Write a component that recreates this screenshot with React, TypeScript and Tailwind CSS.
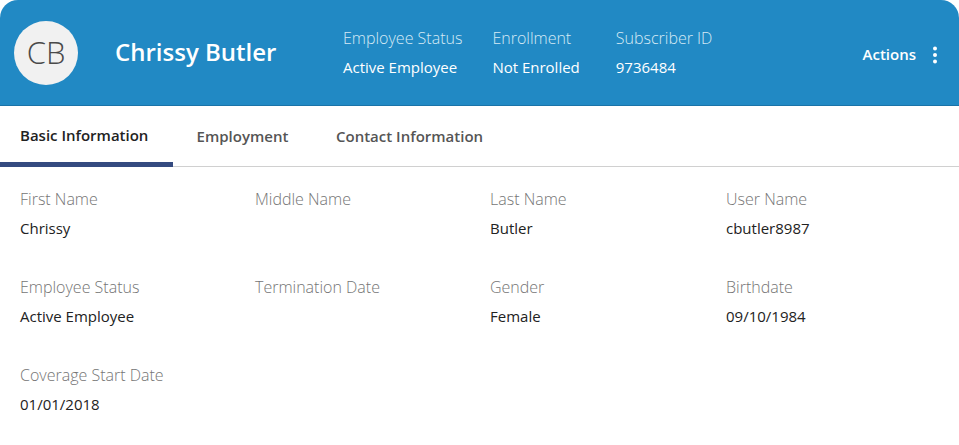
import React from "react";

const font = { fontFamily: '"Open Sans", "Liberation Sans", sans-serif' };

function Stat({ label, value, extra = "" }: { label: string; value: string; extra?: string }) {
  return (
    <div className={"flex flex-col " + extra}>
      <div className="text-[16px] leading-[24px] font-light text-[#d6e9f5]">{label}</div>
      <div className="mt-[6px] text-[15px] leading-[22px] text-white">{value}</div>
    </div>
  );
}

function Field({ label, value }: { label: string; value?: string }) {
  return (
    <div className="flex flex-col">
      <div className="text-[16px] leading-[24px] font-light text-[#757575]">{label}</div>
      <div className="mt-[6px] h-[22px] text-[15px] leading-[22px] text-[#222]">{value ?? ""}</div>
    </div>
  );
}

export default function App() {
  return (
    <div className="w-[959px] h-[445px] bg-white overflow-hidden" style={font}>
      <div className="h-[106px] bg-[#2189c4] rounded-t-[18px] border-b border-[#1a73a8] flex items-center pl-[14px] pr-[21px]">
        <div className="w-[64px] h-[64px] rounded-full bg-[#f1f1f1] flex items-center justify-center text-[31px] font-light text-[#4a4a4a] shrink-0">
          CB
        </div>
        <div className="ml-[37px] w-[228px] text-[24px] font-semibold text-white leading-[32px] -mt-[2px]">
          Chrissy Butler
        </div>
        <div className="flex gap-[30px] -mt-[2px]">
          <Stat label="Employee Status" value="Active Employee" />
          <Stat label="Enrollment" value="Not Enrolled" />
          <Stat label="Subscriber ID" value="9736484" extra="ml-[6px]" />
        </div>
        <div className="ml-auto flex items-center gap-[16px] mt-[4px]">
          <span className="text-[15px] font-semibold text-white">Actions</span>
          <svg width="6" height="18" viewBox="0 0 6 18">
            <circle cx="3" cy="2.5" r="2" fill="white" />
            <circle cx="3" cy="9" r="2" fill="white" />
            <circle cx="3" cy="15.5" r="2" fill="white" />
          </svg>
        </div>
      </div>
      <div className="h-[61px] border-b border-[#d0d0d0] flex">
        <div className="w-[173px] flex items-center pl-[20px] border-b-[5px] border-[#344a80] pt-[3px] -mb-[1px] text-[15px] font-semibold text-[#222]">
          Basic Information
        </div>
        <div className="w-[139px] flex items-center justify-center text-[15px] font-semibold text-[#555]">
          Employment
        </div>
        <div className="flex items-center pl-[24px] text-[15px] font-semibold text-[#555]">
          Contact Information
        </div>
      </div>
      <div className="pl-[20px] pt-[20px] grid grid-cols-[235px_235px_236px_1fr] gap-y-[36px]">
        <Field label="First Name" value="Chrissy" />
        <Field label="Middle Name" />
        <Field label="Last Name" value="Butler" />
        <Field label="User Name" value="cbutler8987" />
        <Field label="Employee Status" value="Active Employee" />
        <Field label="Termination Date" />
        <Field label="Gender" value="Female" />
        <Field label="Birthdate" value="09/10/1984" />
        <Field label="Coverage Start Date" value="01/01/2018" />
      </div>
    </div>
  );
}
